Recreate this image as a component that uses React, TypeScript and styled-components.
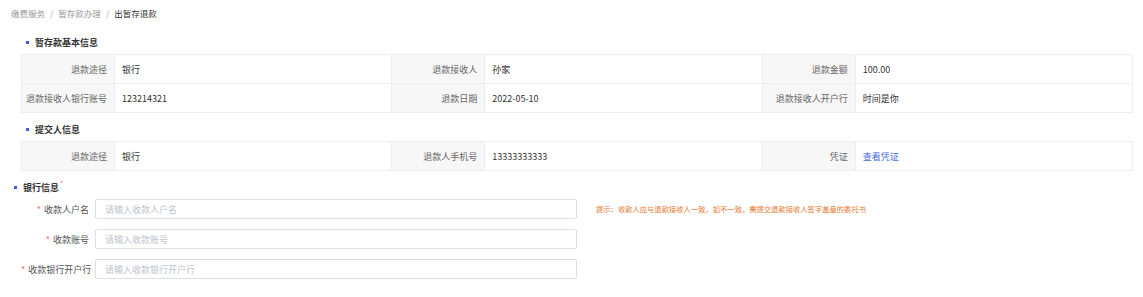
import styled, {createGlobalStyle} from "styled-components";

const GlobalStyle = createGlobalStyle`
    html, body {
        margin: 0;
        padding: 0;
        background: #fff;
    }
    body {
        font-family: "Noto Sans CJK SC", "Noto Sans", sans-serif;
        font-size: 9px;
        color: #333;
    }
    * {
        box-sizing: border-box;
    }
`;

const Breadcrumb = styled.div`
    display: flex;
    align-items: center;
    height: 26px;
    padding-left: 11px;
    font-size: 8.5px;
    color: #999;
`;

const Crumb = styled.span<{ $current?: boolean }>`
    color: ${(p) => (p.$current ? "#333" : "#999")};
`;

const Separator = styled.span`
    margin: 0 5px;
    color: #aaa;
`;

const Body = styled.div`
    padding: 0 10px 0 21px;
`;

const SectionTitle = styled.div<{ $outdent?: boolean }>`
    display: flex;
    align-items: center;
    gap: 6px;
    height: 15px;
    margin: 9px 0 4px ${(p) => (p.$outdent ? "-7px" : "5px")};
    font-weight: bold;
    color: #333;
    line-height: 15px;

    &::before {
        content: "";
        width: 3px;
        height: 3px;
        background: #3d5fd9;
    }
`;

const TitleStar = styled.span`
    color: #f56c6c;
    font-size: 7px;
    font-weight: normal;
    margin-left: -5px;
    align-self: flex-start;
    line-height: 6px;
`;

const InfoTable = styled.div`
    display: grid;
    grid-template-columns: 93px 1fr 93px 1fr 93px 1fr;
    border-top: 1px solid #ebeef5;
    border-left: 1px solid #ebeef5;
`;

const Cell = styled.div<{ $label?: boolean }>`
    height: 29px;
    display: flex;
    align-items: center;
    justify-content: ${(p) => (p.$label ? "flex-end" : "flex-start")};
    padding: 0 7px;
    background: ${(p) => (p.$label ? "#f7f7f8" : "#fff")};
    color: ${(p) => (p.$label ? "#666" : "#333")};
    border-right: 1px solid #ebeef5;
    border-bottom: 1px solid #ebeef5;
    white-space: nowrap;
`;

const Link = styled.a`
    color: #3f6ae0;
    text-decoration: none;
    cursor: pointer;
`;

const Form = styled.div`
    display: flex;
    flex-direction: column;
    gap: 10px;
`;

const FormRow = styled.div`
    display: flex;
    align-items: center;
    height: 20px;
`;

const FormLabel = styled.label`
    width: 74px;
    padding-right: 6px;
    text-align: right;
    color: #555;
    white-space: nowrap;

    &::before {
        content: "*";
        color: #f56c6c;
        margin-right: 3px;
    }
`;

const Input = styled.input`
    width: 482px;
    height: 20px;
    padding: 0 9px;
    border: 1px solid #dcdfe6;
    border-radius: 2px;
    font-family: inherit;
    font-size: 9px;
    color: #333;
    outline: none;

    &::placeholder {
        color: #c0c4cc;
    }
`;

const Hint = styled.span`
    margin-left: 19px;
    font-size: 7.3px;
    color: #e6792f;
    white-space: nowrap;
`;

const baseInfo = [
    ["退款途径", "银行", "退款接收人", "孙家", "退款金额", "100.00"],
    ["退款接收人银行账号", "123214321", "退款日期", "2022-05-10", "退款接收人开户行", "时间是你"],
];

export default function App() {
    return <>
        <GlobalStyle/>
        <Breadcrumb>
            <Crumb>缴费服务</Crumb>
            <Separator>/</Separator>
            <Crumb>暂存款办理</Crumb>
            <Separator>/</Separator>
            <Crumb $current>出暂存退款</Crumb>
        </Breadcrumb>

        <Body>
            <SectionTitle>暂存款基本信息</SectionTitle>
            <InfoTable>
                {baseInfo.flat().map((text, i) => (
                    <Cell key={i} $label={i % 2 === 0}>{text}</Cell>
                ))}
            </InfoTable>

            <SectionTitle>提交人信息</SectionTitle>
            <InfoTable>
                <Cell $label>退款途径</Cell>
                <Cell>银行</Cell>
                <Cell $label>退款人手机号</Cell>
                <Cell>13333333333</Cell>
                <Cell $label>凭证</Cell>
                <Cell><Link>查看凭证</Link></Cell>
            </InfoTable>

            <SectionTitle $outdent>银行信息<TitleStar>*</TitleStar></SectionTitle>
            <Form>
                <FormRow>
                    <FormLabel>收款人户名</FormLabel>
                    <Input placeholder="请输入收款人户名"/>
                    <Hint>提示：收款人应与退款接收人一致，如不一致，需提交退款接收人签字盖章的委托书</Hint>
                </FormRow>
                <FormRow>
                    <FormLabel>收款账号</FormLabel>
                    <Input placeholder="请输入收款账号"/>
                </FormRow>
                <FormRow>
                    <FormLabel>收款银行开户行</FormLabel>
                    <Input placeholder="请输入收款银行开户行"/>
                </FormRow>
            </Form>
        </Body>
    </>
}
